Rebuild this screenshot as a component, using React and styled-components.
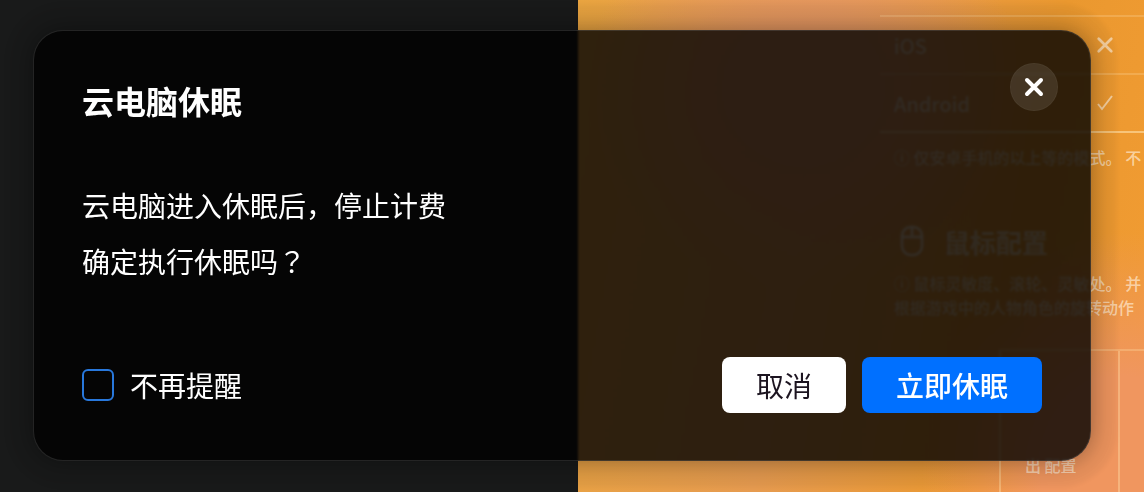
import React from 'react';
import styled, { createGlobalStyle } from 'styled-components';

const GlobalStyle = createGlobalStyle`
  * {
    box-sizing: border-box;
  }

  body {
    margin: 0;
    background: #191919;
    font-family: "Noto Sans CJK SC", "Noto Sans", sans-serif;
  }
`;

const Page = styled.div`
  display: grid;
  grid-template-areas: "stack";
  min-height: 100vh;
  overflow: hidden;
`;

const Desktop = styled.div`
  grid-area: stack;
  display: grid;
  grid-template-columns: 578fr 566fr;
  height: 100vh;
  overflow: hidden;
`;

const DarkPane = styled.div`
  background: #191a1a;
`;

const Wallpaper = styled.div`
  display: flex;
  justify-content: flex-end;
  overflow: hidden;
  background:
    radial-gradient(ellipse 220px 200px at 40% 18%, #e29560 30%, transparent 100%),
    radial-gradient(ellipse 200px 240px at 96% 96%, #f0965f 40%, transparent 100%),
    linear-gradient(100deg, #e9a440 0%, #e69b50 40%, #ea982f 75%, #f29c33 100%);
`;

const Settings = styled.div`
  width: 264px;
  flex: none;
  padding-top: 15px;
  color: rgba(255, 240, 220, 0.65);
`;

const SettingRow = styled.div`
  display: flex;
  justify-content: space-between;
  align-items: center;
  height: 58px;
  padding: 0 30px 0 14px;
  border-top: 2px solid rgba(255, 225, 170, 0.25);
  font-size: 20px;
  font-weight: 500;
`;

const Note = styled.p`
  margin: 0;
  padding: ${({ $line }) => ($line ? '12px' : '8px')} 0 0 14px;
  border-top: ${({ $line }) => ($line ? '2px solid rgba(255, 225, 170, 0.6)' : 'none')};
  font-size: 16px;
  line-height: 24px;
  font-weight: 500;
  white-space: nowrap;
`;

const SettingTitle = styled.h3`
  display: flex;
  align-items: center;
  gap: 20px;
  height: 44px;
  margin: 50px 0 0;
  padding-left: 20px;
  font-size: 26px;
  font-weight: 700;
`;

const Cells = styled.div`
  display: grid;
  grid-template-columns: 119px 1fr;
  height: 160px;
  margin: 30px 0 0 119px;
  border-top: 2px solid rgba(255, 225, 170, 0.3);
`;

const Cell = styled.div`
  padding: 102px 0 0 24px;
  border-left: 2px solid rgba(255, 225, 170, 0.4);
  font-size: 16px;
  line-height: 24px;
  font-weight: 500;
`;

const Overlay = styled.div`
  grid-area: stack;
  z-index: 1;
  align-self: start;
  padding: 30px 53px 30px 33px;
`;

const Dialog = styled.section`
  padding: 32px 48px 47px 48px;
  border: 1px solid rgba(110, 110, 110, 0.3);
  border-radius: 30px;
  background: rgba(0, 0, 0, 0.8);
  backdrop-filter: blur(1px);
  box-shadow:
    0 0 24px rgba(0, 0, 0, 0.36),
    0 0 4px 26px rgba(0, 0, 0, 0.04);
  color: #fff;
`;

const DialogHeader = styled.header`
  display: flex;
  justify-content: space-between;
  align-items: flex-start;
`;

const Title = styled.h2`
  margin: 13px 0 0;
  font-size: 32px;
  line-height: 48px;
  font-weight: 700;
`;

const CloseButton = styled.button`
  display: grid;
  place-items: center;
  width: 48px;
  height: 48px;
  margin-right: -16px;
  padding: 0;
  border: 1px solid rgba(255, 255, 255, 0.03);
  border-radius: 50%;
  background: rgba(255, 255, 255, 0.1);
  color: #fff;
  cursor: pointer;
`;

const Message = styled.p`
  margin: 53px 0 68px;
  font-size: 28px;
  line-height: 56px;
`;

/* centres the question mark in its full-width cell */
const Mark = styled.span`
  font-family: "Noto Sans CJK TC", sans-serif;
`;

const DialogFooter = styled.footer`
  display: flex;
  justify-content: space-between;
  align-items: center;
`;

const Remember = styled.label`
  display: flex;
  align-items: center;
  gap: 16px;
  font-size: 28px;
  line-height: 40px;
`;

const Checkbox = styled.input`
  appearance: none;
  width: 32px;
  height: 32px;
  margin: 0;
  border: 2px solid #2878dc;
  border-radius: 6px;
  background: transparent;

  &:checked {
    background: #0070ff;
  }
`;

const Actions = styled.div`
  display: flex;
  gap: 16px;
`;

const Button = styled.button`
  height: 56px;
  padding: 0 34px;
  border: none;
  border-radius: 8px;
  background: ${({ $primary }) => ($primary ? '#0070ff' : '#fff')};
  color: ${({ $primary }) => ($primary ? '#fff' : '#1c1420')};
  font-family: inherit;
  font-size: 28px;
  line-height: 40px;
  font-weight: ${({ $primary }) => ($primary ? 500 : 400)};
  cursor: pointer;
`;

const CrossIcon = ({ size, weight }) => (
  <svg width={size} height={size} viewBox="0 0 20 20" fill="none" stroke="currentColor" strokeWidth={weight} strokeLinecap="round">
    <path d="M3 3 17 17M17 3 3 17" />
  </svg>
);

const CheckIcon = () => (
  <svg width="18" height="18" viewBox="0 0 18 18" fill="none" stroke="currentColor" strokeWidth="2">
    <path d="M2 10 6 15 16 2" />
  </svg>
);

const MouseIcon = () => (
  <svg width="24" height="32" viewBox="0 0 24 32" fill="none" stroke="currentColor" strokeWidth="3">
    <rect x="2" y="2" width="20" height="28" rx="9" />
    <path d="M2 12H22M12 2V12" />
  </svg>
);

const App = () => {
  return (
    <>
      <GlobalStyle />
      <Page>
        <Desktop>
          <DarkPane />
          <Wallpaper>
            <Settings>
              <SettingRow>iOS <CrossIcon size={18} weight={3} /></SettingRow>
              <SettingRow>Android <CheckIcon /></SettingRow>
              <Note $line>ⓘ 仅安卓手机的以上等的模式。 不</Note>
              <SettingTitle><MouseIcon />鼠标配置</SettingTitle>
              <Note>ⓘ 鼠标灵敏度、滚轮、灵敏处。 并<br />根据游戏中的人物角色的旋转动作</Note>
              <Cells>
                <Cell>出 配置</Cell>
                <Cell />
              </Cells>
            </Settings>
          </Wallpaper>
        </Desktop>
        <Overlay>
          <Dialog role="dialog" aria-labelledby="dialog-title">
            <DialogHeader>
              <Title id="dialog-title">云电脑休眠</Title>
              <CloseButton aria-label="关闭"><CrossIcon size={20} weight={4} /></CloseButton>
            </DialogHeader>
            <Message>
              云电脑进入休眠后，停止计费<br />
              确定执行休眠吗<Mark>？</Mark>
            </Message>
            <DialogFooter>
              <Remember htmlFor="remember">
                <Checkbox type="checkbox" id="remember" />
                不再提醒
              </Remember>
              <Actions>
                <Button type="button">取消</Button>
                <Button type="button" $primary>立即休眠</Button>
              </Actions>
            </DialogFooter>
          </Dialog>
        </Overlay>
      </Page>
    </>
  );
};

export default App;
